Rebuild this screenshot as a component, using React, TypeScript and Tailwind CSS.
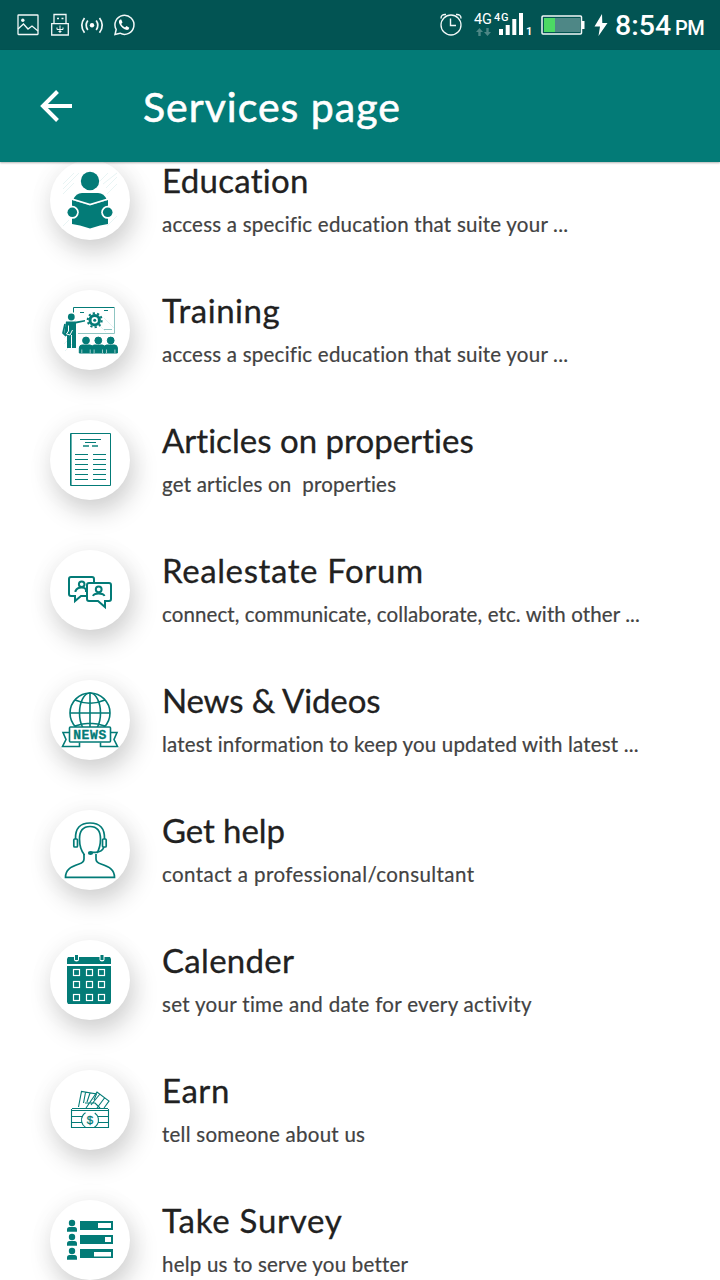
import React from "react";

const TEAL = "#037b77";

type Service = {
  title: string;
  titleTracking: string;
  text: string;
  textTracking: string;
  icon: React.ReactNode;
};

const Person = ({ x, y }: { x: number; y: number }) => (
  <g transform={`translate(${x} ${y})`} fill={TEAL}>
    <circle cx="0" cy="0" r="3.4" />
    <path d="M-6.700 12.500V7.500Q-6.500 4.500-4 4.500H4Q6.500 4.500 6.700 7.500V12.500Z" />
    <path d="M-4.200 12.500V9M4.200 12.500V9" stroke="#fff" strokeWidth=".6" />
  </g>
);

const educationIcon = (
  <g fill={TEAL}>
    <path d="M13 24L24 13M13 29L29 13M13 34L24 23M50 21L58 13M53 24L67 13M56 28L67 17M57 34L67 24M57 66L67 56M13 66L19 60" stroke="#e8f4f4" strokeWidth="1" />
    <circle cx="40" cy="21" r="9.200" />
    <path d="M23 40Q26 33 32 33H48Q54 33 57 40L40 45Z" />
    <path d="M22 40L40 45L58 40V64L50 65.500L40 68.500L30 65.500L22 64Z" />
    <path d="M21 38.800L40 44.600L59 38.800" fill="none" stroke="#fff" strokeWidth="1.600" />
    <circle cx="22.300" cy="52.300" r="6.500" fill="#fff" />
    <circle cx="57.700" cy="52.300" r="6.500" fill="#fff" />
    <circle cx="22.300" cy="52.300" r="4.800" />
    <circle cx="57.700" cy="52.300" r="4.800" />
  </g>
);

const trainingIcon = (
  <g fill="none" stroke={TEAL}>
    <path d="M14 42L26 30M14 48L20 42M14 54L22 46M45 31L56 42M54 28L64 38M15 61L23 53" stroke="#e4f2f2" strokeWidth="1" />
    <path d="M23.500 22.500V17.500H64.500" />
    <path d="M64.500 17.500V43.500H28" stroke="#8fc5c2" />
    <path d="M30 22.500H34M54 20.500H58" />
    <path d="M54 39.500H62" stroke="#8fc5c2" />
    <circle cx="44.700" cy="30.200" r="4.700" strokeWidth="3" />
    <circle cx="44.700" cy="30.200" r="7" strokeWidth="2" strokeDasharray="2.200 2.198" />
    <circle cx="44.700" cy="30.200" r="1.500" fill={TEAL} stroke="none" />
    <circle cx="21.300" cy="27" r="3.400" fill={TEAL} stroke="none" />
    <path d="M16 31.500H26L35 30V31.500L26 33.500V58H22V45H21V58H17V46L14 44Z" fill={TEAL} stroke="none" />
    <path d="M15 34L13 43L16 46" strokeWidth="1.700" />
    <path d="M18.500 35.500V41L16.500 44L20 45L22.500 40" stroke="#fff" />
    <Person x={36} y={50.500} />
    <Person x={48.300} y={50.500} />
    <Person x={60.700} y={50.500} />
  </g>
);

const articleIcon = (
  <g fill="none" stroke={TEAL}>
    <path d="M20.500 13.500H60.500V65.500H20.500Z" />
    <path d="M21.500 14V65" stroke="#67b1ad" />
    <path d="M30 19.500H51M35 22.500H46" />
    <path d="M33 26H39M42 26H48" strokeWidth="2" stroke="#4ba29d" />
    <path d="M25 34.500H38M43 34.500H56M25 39.500H38M43 39.500H56M25 44.500H38M43 44.500H56M25 49.500H38M43 49.500H56M25 54.500H38M43 54.500H56M25 59.500H38M43 59.500H56" />
  </g>
);

const forumIcon = (
  <g fill="none" stroke={TEAL} strokeWidth="2">
    <path d="M36 46H31L25 51V46H21Q19 46 19 44V29Q19 27 21 27H42Q44 27 44 29V32" />
    <path d="M25.500 42V41Q27 37.500 31.500 37.500Q35 37.500 36 39.500V42" />
    <circle cx="31.700" cy="34.300" r="2.800" />
    <path d="M39 33H59Q61 33 61 35V49Q61 51 59 51H55V57L48 51H39Q37 51 37 49V35Q37 33 39 33Z" fill="#fff" />
    <circle cx="48.700" cy="39.300" r="2.900" />
    <path d="M43 46Q44 43.500 48.500 43.500Q53.500 43.500 54.500 46" />
  </g>
);

const newsIcon = (
  <g fill="none" stroke={TEAL} strokeWidth="1.600">
    <circle cx="40" cy="33" r="20" />
    <ellipse cx="40" cy="33" rx="10.500" ry="20" />
    <path d="M40 12.500V50M20 33H60M25 20Q40 26.500 55 20M25 46Q40 40.500 55 46" />
    <path d="M19.500 52.500H13L16 59.500L12.500 66.500H29.500V62.500M60.500 52.500H67L64 59.500L67.500 66.500H50.500V62.500" fill="#fff" />
    <rect x="19.500" y="47" width="41" height="15" rx="1" fill="#fff" />
    <text x="23.200" y="59" textLength="33" lengthAdjust="spacing" fill={TEAL} stroke={TEAL} strokeWidth=".3" fontFamily="Liberation Mono, monospace" fontSize="13" fontWeight="700">NEWS</text>
  </g>
);

const helpIcon = (
  <g fill="none" stroke={TEAL} strokeWidth="1.700">
    <path d="M34 44V49Q34 52.500 29 54C20 57 15.500 60 15.500 67.300H64.500C64.500 60 60 57 51 54Q46 52.500 46 49V44" />
    <path d="M34.500 45Q29.500 39 29.500 29Q29.500 16.500 40 16.500Q50.500 16.500 50.500 29Q50.500 37 47 43" />
    <path d="M25.500 29Q25 13 40 13Q55 13 54.500 29" />
    <rect x="23.800" y="29" width="3.700" height="8" rx="1" />
    <rect x="52.500" y="29" width="3.700" height="8" rx="1" />
    <path d="M54 37Q52 42 46 42.300H41" />
    <ellipse cx="40.500" cy="43" rx="2.600" ry="1.900" fill={TEAL} stroke="none" />
  </g>
);

const calendarCells = [23, 36, 48].flatMap((x) => [29, 41, 54].map((y) => ({ x, y })));

const calendarIcon = (
  <g>
    <path d="M18 17H60L61 19V24H17V19ZM17 26H61V62L60 64H18L17 62Z" fill={TEAL} />
    <path d="M24 17V19.500Q24 21.500 26.500 21.500Q29 21.500 29 19.500V17M49.500 17V19.500Q49.500 21.500 52 21.500Q54.500 21.500 54.500 19.500V17" fill="#fff" />
    <path d="M25 15H28V20H25ZM50.500 15H53.500V20H50.500Z" fill={TEAL} />
    {calendarCells.map(({ x, y }) => (
      <rect key={`${x}-${y}`} x={x + 0.5} y={y + 0.5} width="6" height="6" fill={TEAL} stroke="#fff" strokeWidth="1.200" />
    ))}
  </g>
);

const earnIcon = (
  <g fill="none" stroke={TEAL} strokeWidth="1.100">
    <path d="M28.500 37L31.500 21.500L46.500 24L44 30M35.500 22.500L33.500 33M40 23L37 32" />
    <path d="M36 38L47 22L59 31L54 38M50 24L41 35M54.500 28L47 38M35 33H45L50 38" />
    <path d="M21.500 39V57.500H58.500V39" />
    <path d="M22 38.500H58M22 40.500H58M22 46.500H32M22 52.500H32M48 46.500H58M48 52.500H58" />
    <circle cx="40" cy="50" r="8.500" strokeDasharray="17 9.700 17 9.700" transform="rotate(123 40 50)" />
    <text x="40" y="54.200" textAnchor="middle" fill={TEAL} stroke={TEAL} strokeWidth=".3" fontFamily="Liberation Sans, sans-serif" fontSize="11.500">$</text>
  </g>
);

const surveyIcon = (
  <g fill={TEAL}>
    {[0, 14, 28].map((y) => (
      <g key={y} transform={`translate(0 ${y})`}>
        <circle cx="22" cy="23" r="3.200" />
        <path d="M17 31.800V29.500Q17 27 19.500 27H24.500Q27 27 27 29.500V31.800Z" />
        <rect x="30" y="21" width="33" height="9" />
      </g>
    ))}
    <path d="M48 23H61V28H48ZM55 37H61V42H55ZM44 52H61V56.500H44Z" fill="#fff" />
  </g>
);

const services: Service[] = [
  { title: "Education", titleTracking: "tracking-[0.3px]", text: "access a specific education that suite your ...", textTracking: "tracking-[0.23px]", icon: educationIcon },
  { title: "Training", titleTracking: "tracking-[0.55px]", text: "access a specific education that suite your ...", textTracking: "tracking-[0.23px]", icon: trainingIcon },
  { title: "Articles on properties", titleTracking: "tracking-[0.02px]", text: "get articles on  properties", textTracking: "tracking-[0.2px]", icon: articleIcon },
  { title: "Realestate Forum", titleTracking: "tracking-[0.6px]", text: "connect, communicate, collaborate, etc. with other ...", textTracking: "tracking-[0.1px]", icon: forumIcon },
  { title: "News & Videos", titleTracking: "tracking-[-0.16px]", text: "latest information to keep you updated with latest ...", textTracking: "tracking-[0.17px]", icon: newsIcon },
  { title: "Get help", titleTracking: "tracking-[-0.1px]", text: "contact a professional/consultant", textTracking: "tracking-[0.42px]", icon: helpIcon },
  { title: "Calender", titleTracking: "tracking-[0.3px]", text: "set your time and date for every activity", textTracking: "tracking-[0.32px]", icon: calendarIcon },
  { title: "Earn", titleTracking: "tracking-[0.55px]", text: "tell someone about us", textTracking: "tracking-[0.25px]", icon: earnIcon },
  { title: "Take Survey", titleTracking: "tracking-[0.75px]", text: "help us to serve you better", textTracking: "tracking-[0.22px]", icon: surveyIcon },
];

function StatusBar() {
  return (
    <div className="flex h-[50px] shrink-0 items-center justify-between bg-[#025453] text-white">
      <svg width="150" height="50" viewBox="0 0 150 50" fill="none" stroke="#f2f8f8" strokeWidth="1.300">
        <rect x="18" y="15" width="20" height="19.500" rx=".5" />
        <circle cx="22.800" cy="20.300" r="1.700" fill="#f2f8f8" stroke="none" />
        <path d="M18 29L23.500 24L28 29L32 26L38 31" />
        <path d="M54 24V14.500H66V24M51.700 23.700H68.300V35H51.700Z" />
        <path d="M57 18.500H59M61.500 18.500H63.500" strokeWidth="1.500" />
        <path d="M60 25.500V33M57 27.500V29.500H63V27.500M58.500 31.500H61.500" strokeWidth="1" />
        <circle cx="92" cy="25.300" r="2.200" fill="#fff" stroke="none" />
        <path d="M87.800 20.500Q84.500 25.300 87.800 30M96.200 20.500Q99.500 25.300 96.200 30M84.500 18Q79 25.300 84.500 32.700M99.500 18Q105 25.300 99.500 32.700" strokeWidth="1.700" />
        <path d="M115 34.500L116.200 29.500A9.500 9.500 0 1 1 120 33.200Z" strokeWidth="1.500" />
        <path d="M120.200 19.500Q118 21 119.500 24Q122 29 127 30Q129 30 129.300 27.800L126.500 26L125 27.500Q122.500 26.500 121.200 24L122.500 22.500L121.300 19.500Z" fill="#fff" stroke="none" />
      </svg>
      <div className="flex h-[50px] items-center">
        <svg width="176" height="50" viewBox="436 0 176 50" fill="none" stroke="#f2f8f8">
          <circle cx="451" cy="25" r="10" strokeWidth="1.300" />
          <path d="M450.500 18.500V25.500H456M441 18.500Q441 14 446 14.500M456 14.500Q461 14 461 18.500" strokeWidth="1.400" />
          <g fill="#fff" stroke="none" fontFamily="Roboto, sans-serif">
            <text x="474" y="24" fontSize="14.500" textLength="18">4G</text>
            <text x="494" y="21" fontSize="11" fontWeight="500" textLength="14.500">4G</text>
            <text x="526" y="35" fontSize="11" fontWeight="700">1</text>
          </g>
          <path d="M479.500 28L483 32H480.700V36H478.300V32H476ZM487.500 36L484 32H486.300V28H488.700V32H491Z" fill="#4e8786" stroke="none" />
          <path d="M501 29V35M507.700 25V35M514.300 19V35M521 13V35" stroke="#fff" strokeWidth="4" />
          <rect x="542" y="16" width="39.500" height="18" rx="1" strokeWidth="1.500" />
          <path d="M544 18H555V32H544Z" fill="#4cd964" stroke="none" />
          <path d="M555 18H580V32H555Z" fill="#4e8786" stroke="none" />
          <path d="M582 21H584.500V29H582Z" fill="#fff" stroke="none" />
          <path d="M602 14L594.500 26.500H600L598.500 36L607.500 23H602.300Z" fill="#fff" stroke="none" />
        </svg>
        <div className="flex w-[108px] items-baseline pt-[3px] font-[Roboto,sans-serif] leading-none">
          <span className="w-[57px] whitespace-nowrap pl-[3px] text-[28.500px] font-medium">8:54</span>
          <span className="ml-[6px] text-[20px] font-medium tracking-[-0.5px]">PM</span>
        </div>
      </div>
    </div>
  );
}

export default function App() {
  return (
    <div className="flex h-[1280px] w-[720px] flex-col overflow-hidden bg-white font-[Lato,sans-serif]">
      <StatusBar />
      <header className="z-10 flex h-[112px] shrink-0 items-center bg-[#037b77] pl-10 text-white shadow-[0_1px_2px_rgba(0,0,0,0.3)]">
        <svg width="32" height="32" viewBox="0 0 32 32" fill="none" stroke="#fff" strokeWidth="4">
          <path d="M17.500 1.500L3 16L17.500 30.500M3 16H32" />
        </svg>
        <h1 className="ml-[71px] whitespace-nowrap pt-px text-[41px] leading-none tracking-[1px] [-webkit-text-stroke:0.6px_#fff]">Services page</h1>
      </header>
      <main className="min-h-0 flex-1 overflow-hidden">
        <ul className="-mt-[27px]">
          {services.map((s) => (
            <li key={s.title} className="flex h-[130px] items-center pl-[50px]">
              <div className="h-20 w-20 shrink-0 rounded-full bg-white shadow-[4px_12px_26px_rgba(0,0,0,0.18),0_0_30px_rgba(0,0,0,0.04)]">
                <svg width="80" height="80" viewBox="0 0 80 80">{s.icon}</svg>
              </div>
              <div className="-mt-[5px] ml-8 flex flex-col whitespace-pre">
                <h2 className={`text-[33px] leading-10 text-[#212121] [-webkit-text-stroke:0.3px_#212121] ${s.titleTracking}`}>{s.title}</h2>
                <p className={`mt-[12px] text-[20.5px] leading-6 text-[#424242] [-webkit-text-stroke:0.2px_#424242] ${s.textTracking}`}>{s.text}</p>
              </div>
            </li>
          ))}
        </ul>
      </main>
    </div>
  );
}
